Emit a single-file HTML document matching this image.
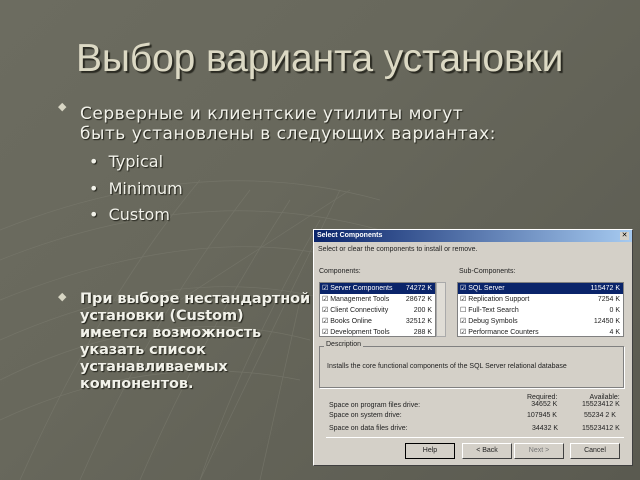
<!DOCTYPE html>
<html><head><meta charset="utf-8"><style>
*{margin:0;padding:0;box-sizing:border-box}
body{width:640px;height:480px;overflow:hidden;position:relative;background:linear-gradient(135deg,#6c6c60 0%,#68685c 40%,#5a5a50 100%);font-family:"DejaVu Sans","Liberation Sans",sans-serif}
.t{position:absolute;left:76px;top:37px;font-family:"Liberation Sans",sans-serif;font-size:39px;color:#dcd9c4;text-shadow:2px 2px 1px #2a2a22;white-space:nowrap;letter-spacing:-0.1px}
.b{position:absolute;color:#f2f2ea;text-shadow:1px 1px 1px #202018;white-space:nowrap}
.d{position:absolute;color:#d8d6c4;font-size:11px}
.dlg{position:absolute;left:313px;top:229px;width:320px;height:237px;background:#d4d0c8;border:1px solid #fff;border-right-color:#404040;border-bottom-color:#404040;font-family:"Liberation Sans",sans-serif;font-size:7px;color:#222}
.tb{height:12px;background:linear-gradient(90deg,#0a246a,#a6caf0);color:#fff;font-weight:bold;font-size:7px;padding-left:3px;line-height:12px}
.x{position:absolute;right:3px;top:2px;width:9px;height:8px;background:#d4d0c8;color:#000;font-size:7px;line-height:8px;text-align:center}
.a{position:absolute;white-space:nowrap}
.lst{position:absolute;background:#fff;border:1px solid #808080}
.r{height:11px;line-height:11px;padding-left:2px;display:flex;justify-content:space-between;padding-right:3px}
.sel{background:#0a246a;color:#fff}
.btn{position:absolute;top:213px;width:50px;height:16px;border:1px solid #fff;border-right-color:#404040;border-bottom-color:#404040;text-align:center;line-height:14px}
</style></head><body>
<svg style="position:absolute;left:0;top:0" width="640" height="480"><g stroke="#7c7c70" stroke-width="0.7" fill="none" opacity="0.6">
<path d="M0 230 Q200 150 380 200"/><path d="M0 260 Q200 180 380 230"/><path d="M0 300 Q200 220 350 260"/><path d="M0 340 Q180 260 330 300"/><path d="M0 380 Q160 300 310 340"/><path d="M20 480 Q100 300 200 180"/><path d="M80 480 Q150 320 250 190"/><path d="M140 480 Q200 340 290 200"/><path d="M200 480 Q240 360 320 220"/><path d="M260 480 L300 300"/><path d="M0 420 Q150 350 300 380"/><path d="M200 480 L340 190"/><path d="M180 300 L350 190"/></g></svg>
<div class="t">Выбор варианта установки</div>
<div class="d" style="left:58px;top:100px">◆</div>
<div class="b" style="left:80px;top:104px;font-size:17px;line-height:20px;letter-spacing:0.5px">Серверные и клиентские утилиты могут<br>быть установлены в следующих вариантах:</div>
<div class="b" style="left:89px;top:149px;font-size:16px;line-height:26.5px">•&nbsp; Typical<br>•&nbsp; Minimum<br>•&nbsp; Custom</div>
<div class="d" style="left:58px;top:290px">◆</div>
<div class="b" style="left:80px;top:291px;font-size:14.5px;line-height:17px;font-weight:bold;letter-spacing:-0.1px">При выборе нестандартной<br>установки (Custom)<br>имеется возможность<br>указать список<br>устанавливаемых<br>компонентов.</div>
<div class="dlg">
<div class="tb">Select Components</div><div class="x">✕</div>
<div class="a" style="left:4px;top:16px">Select or clear the components to install or remove.</div>
<div class="a" style="left:5px;top:38px">Components:</div>
<div class="a" style="left:145px;top:38px">Sub-Components:</div>
<div class="lst" style="left:5px;top:52px;width:117px;height:55px">
<div class="r sel"><span>☑ Server Components</span><span>74272 K</span></div>
<div class="r"><span>☑ Management Tools</span><span>28672 K</span></div>
<div class="r"><span>☑ Client Connectivity</span><span>200 K</span></div>
<div class="r"><span>☑ Books Online</span><span>32512 K</span></div>
<div class="r"><span>☑ Development Tools</span><span>288 K</span></div>
</div>
<div class="a" style="left:122px;top:52px;width:10px;height:55px;background:#e0ddd6;border:1px solid #aaa"></div>
<div class="lst" style="left:143px;top:52px;width:167px;height:55px">
<div class="r sel"><span>☑ SQL Server</span><span>115472 K</span></div>
<div class="r"><span>☑ Replication Support</span><span>7254 K</span></div>
<div class="r"><span>☐ Full-Text Search</span><span>0 K</span></div>
<div class="r"><span>☑ Debug Symbols</span><span>12450 K</span></div>
<div class="r"><span>☑ Performance Counters</span><span>4 K</span></div>
</div>
<div class="a" style="left:5px;top:116px;width:305px;height:42px;border:1px solid #808080;box-shadow:1px 1px 0 #fff"></div>
<div class="a" style="left:10px;top:111px;background:#d4d0c8;padding:0 2px">Description</div>
<div class="a" style="left:13px;top:133px">Installs the core functional components of the SQL Server relational database</div>
<div class="a" style="left:213px;top:164px;text-align:right">Required:<br>34652 K</div>
<div class="a" style="left:268px;top:164px;text-align:right">Available:<br>15523412 K</div>
<div class="a" style="left:15px;top:172px">Space on program files drive:</div>
<div class="a" style="left:15px;top:182px">Space on system drive:</div><div class="a" style="left:213px;top:182px">107945 K</div><div class="a" style="left:270px;top:182px">55234 2 K</div>
<div class="a" style="left:15px;top:195px">Space on data files drive:</div><div class="a" style="left:218px;top:195px">34432 K</div><div class="a" style="left:268px;top:195px">15523412 K</div>
<div class="a" style="left:12px;top:207px;width:298px;border-top:1px solid #fff"></div>
<div class="btn" style="left:91px;border:1px solid #000">Help</div>
<div class="btn" style="left:148px">&lt; Back</div>
<div class="btn" style="left:200px;color:#777">Next &gt;</div>
<div class="btn" style="left:256px">Cancel</div>
</div>
</body></html>
